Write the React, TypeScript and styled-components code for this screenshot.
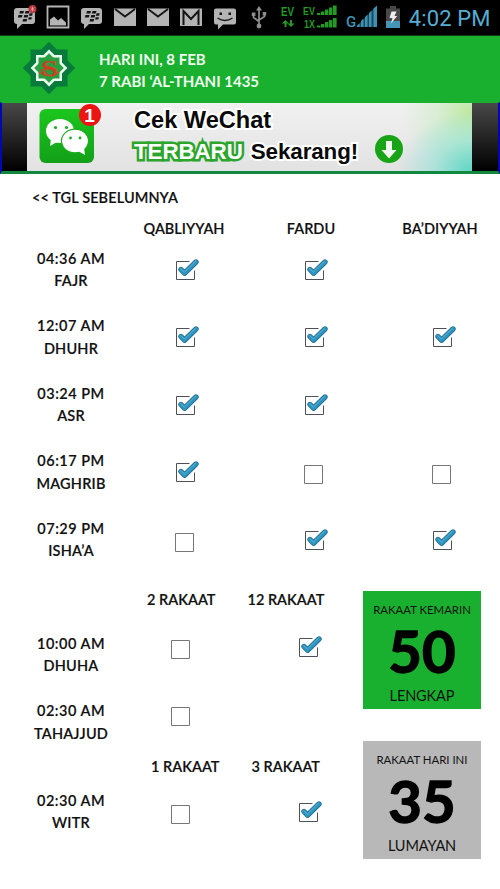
import React, { FC } from 'react';
import styled, { createGlobalStyle } from 'styled-components';

const COLORS = {
  green: '#18b02e',
  darkGreen: '#087a3c',
  grey: '#b8b8b8',
  icon: '#b4b4b4',
  holo: '#55aed2',
  signal: '#239a23',
  black: '#111',
};

type Mark = 'on' | 'off' | 'none';

interface prayerInterface {
  time: string;
  name: string;
  marks: Mark[];
};

interface rowInterface extends prayerInterface {
  compact?: boolean;
  markTop?: number;
};

const DAILY: prayerInterface[] = [
  { time: '04:36 AM', name: 'FAJR', marks: ['on', 'on', 'none'] },
  { time: '12:07 AM', name: 'DHUHR', marks: ['on', 'on', 'on'] },
  { time: '03:24 PM', name: 'ASR', marks: ['on', 'on', 'none'] },
  { time: '06:17 PM', name: 'MAGHRIB', marks: ['on', 'off', 'off'] },
  { time: '07:29 PM', name: 'ISHA’A', marks: ['off', 'on', 'on'] },
];

const NIGHT: prayerInterface[] = [
  { time: '10:00 AM', name: 'DHUHA', marks: ['off', 'on'] },
  { time: '02:30 AM', name: 'TAHAJJUD', marks: ['off', 'none'] },
];

const WITR: prayerInterface = { time: '02:30 AM', name: 'WITR', marks: ['off', 'on'] };

const BbmIcon: FC<{ alert?: boolean }> = ({ alert }) => (
  <StatusIcon viewBox="0 0 24 24">
    <path d="M4 3h15q3 0 3 3v10q0 3-3 3H9l-5 5v-5q-3 0-3-3V6q0-3 3-3z" fill={COLORS.icon} />
    <path
      d="M7 6h4l-.7 2.6H6.3zM12.5 6h4l-.7 2.6h-4zM5.5 10h4l-.7 2.6h-4zM11.3 10h4l-.7 2.6h-4zM16.5 8.3h3.2l-.6 2.4h-3.2zM15.7 12.2h3.2l-.6 2.4h-3.2zM10.2 14h4l-.7 2.6h-4z"
      fill="#151515"
    />
    {alert && (
      <>
        <circle cx="19.5" cy="4" r="4" fill="#b8323c" />
        <path d="M17.5 2.5l4 3m0-3l-4 3m2-4v5" stroke="#e4a0a0" strokeWidth=".8" />
      </>
    )}
  </StatusIcon>
);

const PictureIcon = () => (
  <StatusIcon viewBox="0 0 24 24">
    <path d="M1.5 1.5h21v21h-21z" fill="none" stroke={COLORS.icon} strokeWidth="1.8" />
    <path d="M4 20.5v-6l4-3 4 4 3-2.5 5 4.5v3z" fill={COLORS.icon} />
  </StatusIcon>
);

const MailIcon = () => (
  <StatusIcon viewBox="0 0 24 24">
    <path d="M1 3.5h22V21H1z" fill={COLORS.icon} />
    <path d="M2 4l10 7.5L22 4" fill="none" stroke="#151515" strokeWidth="1.8" />
  </StatusIcon>
);

const GmailIcon = () => (
  <StatusIcon viewBox="0 0 24 24">
    <path d="M1 3.5h22V21H1z" fill={COLORS.icon} />
    <path d="M4.5 20V6l7.5 8 7.5-8v14" fill="none" stroke="#151515" strokeWidth="2" />
  </StatusIcon>
);

const SmsIcon = () => (
  <StatusIcon viewBox="0 0 24 24">
    <path d="M3 3.5h18q2 0 2 2v12q0 2-2 2H10l-5 5v-5H3q-2 0-2-2v-12q0-2 2-2z" fill={COLORS.icon} />
    <path d="M6.5 7.5H9V10H6.5zM15.5 7.5H18V10h-2.5z" fill="#151515" />
    <path d="M4.5 13q7.5 5 15 0" fill="none" stroke="#151515" strokeWidth="1.5" />
  </StatusIcon>
);

const UsbIcon = () => (
  <UsbSvg viewBox="0 0 16 24">
    <path
      d="M8 4v17M2.5 9v3.5l5.5 4M13.5 9v2.5L8 15"
      fill="none"
      stroke="#8e8e8e"
      strokeWidth="1.7"
    />
    <path d="M8 1l3 4.5H5zM.8 7.5h3.6v3.4H.8zM11.7 7h3.5v3.5h-3.5z" fill="#8e8e8e" />
    <circle cx="8" cy="21" r="2.4" fill="#8e8e8e" />
  </UsbSvg>
);

const DataIcon = () => (
  <DataSvg viewBox="0 0 14 24">
    <SignalText x="0" y="11" textLength="13" lengthAdjust="spacingAndGlyphs">EV</SignalText>
    <path
      d="M3.5 22v-3.5H.8L4.3 15l3.5 3.5H5.5V22zM9 15h2v3.5h2.5L10 22l-3.5-3.5H9z"
      fill={COLORS.signal}
    />
  </DataSvg>
);

const Bars: FC<{ y: number }> = ({ y }) => (
  <path
    d={`M14 ${y}v-2h3.4v2zM18 ${y}v-3.5h3.4v3.5zM22 ${y}v-5.5h3.4v5.5zM26 ${y}v-7.5h3.4v7.5zM30 ${y}v-9.5h3.6v9.5z`}
    fill={COLORS.signal}
  />
);

const EvIcon = () => (
  <EvSvg viewBox="0 0 34 24">
    <SmallSignalText x="0" y="10" textLength="12" lengthAdjust="spacingAndGlyphs">EV</SmallSignalText>
    <Bars y={10} />
    <SmallSignalText x="1" y="22.5" textLength="11" lengthAdjust="spacingAndGlyphs">1X</SmallSignalText>
    <Bars y={22.5} />
  </EvSvg>
);

const GsmIcon = () => (
  <GsmSvg viewBox="0 0 32 24">
    <GsmText x="0" y="21.5">G</GsmText>
    <path d="M10 22L31 .5V22z" fill="#1b4a5e" />
    <path
      d="M11 22v-1.5l2.5-2V22zM15 22v-6l2.5-2.5V22zM19 22V12l2.5-2.5V22zM23 22V8l2.5-2.5V22zM27.5 22V3.5L31 .5V22z"
      fill="#3f91b2"
    />
  </GsmSvg>
);

const BatteryIcon = () => (
  <BatterySvg viewBox="0 0 14 22">
    <path d="M4 0h6v2.5h4V22H0V2.5h4z" fill="#484848" />
    <path d="M0 15h14v7H0z" fill="#4595b7" />
    <path d="M5.5 5.5h5L8.5 10h2.7L5 17.5 6.5 12h-3z" fill="#eee" />
  </BatterySvg>
);

const StarLogo = () => (
  <LogoSvg viewBox="-27 -27 54 54">
    <g fill={COLORS.darkGreen}>
      <path d="M-18.5-18.5h37v37h-37z" />
      <path d="M-18.5-18.5h37v37h-37z" transform="rotate(45)" />
    </g>
    <g fill="#e9fff0">
      <path d="M-13-13h26v26h-26z" />
      <path d="M-13-13h26v26h-26z" transform="rotate(45)" />
    </g>
    <g fill="#2c9d3f">
      <path d="M-10.5-10.5h21v21h-21z" />
      <path d="M-10.5-10.5h21v21h-21z" transform="rotate(45)" />
    </g>
    <LogoLetter x="-8" y="7.5" textLength="17" lengthAdjust="spacingAndGlyphs">S</LogoLetter>
    <path
      d="M-10 6q5-4 9 .5T10 3.500M-9 3q3-3 7-1M-4-6V5M-7-2L7 2"
      fill="none"
      stroke="#c84322"
      strokeWidth="1.1"
    />
  </LogoSvg>
);

const WechatIcon = () => (
  <WechatSvg viewBox="0 0 64 62">
    <defs>
      <linearGradient id="wechat" x1="0" y1="0" x2="0" y2="1">
        <stop offset="0" stopColor="#1cc61e" />
        <stop offset="1" stopColor="#12a018" />
      </linearGradient>
    </defs>
    <rect x="0.5" y="6" width="54.5" height="54" rx="6" fill="url(#wechat)" />
    <path d="M12 36l-1 7 7-4z" fill="#fff" />
    <ellipse cx="21" cy="28" rx="14" ry="12" fill="#fff" />
    <ellipse cx="36" cy="38" rx="13.5" ry="11.8" fill="#fff" stroke="#19ae1d" strokeWidth="1.2" />
    <path d="M39 48l7 4-1-7z" fill="#fff" />
    <g fill="#19ae1d">
      <circle cx="16.5" cy="24.5" r="1.6" />
      <circle cx="27.5" cy="24.5" r="1.6" />
      <circle cx="31.5" cy="35" r="1.4" />
      <circle cx="41" cy="35" r="1.4" />
    </g>
    <circle cx="51" cy="12" r="11" fill="#ec1513" />
    <BadgeText x="50.5" y="19" textAnchor="middle">1</BadgeText>
  </WechatSvg>
);

const DownloadIcon = () => (
  <DownloadSvg viewBox="0 0 28 28">
    <circle cx="14" cy="14" r="14" fill="#18a416" />
    <path d="M11 6h6v9h4.5L14 23.5 6.5 15H11z" fill="#f2f7ef" />
  </DownloadSvg>
);

const Checkbox: FC<{ mark: Mark }> = ({ mark }) => {
  if (mark === 'none') return null;
  if (mark === 'off') {
    return (
      <CheckSvg viewBox="0 0 28 26">
        <path d="M4.5 6.5h18v18h-18z" fill="#fff" stroke="#777" />
      </CheckSvg>
    );
  }
  return (
    <CheckSvg viewBox="0 0 28 26">
      <path d="M18.5 4.5h-13v18h18v-9" fill="none" stroke="#4d5157" />
      <g fill="none" strokeLinecap="round" strokeLinejoin="round">
        <path d="M10 12.5l3.5 3.7L25 5" stroke="#276f90" strokeWidth="5.4" />
        <path d="M10 12.5l3.5 3.7L25 5" stroke="#2e95c0" strokeWidth="3.8" />
        <path d="M9.8 11.8l3.6 3.2L24.5 4.2" stroke="#58b4d8" strokeWidth="1" />
      </g>
    </CheckSvg>
  );
};

const PrayerRow: FC<rowInterface> = ({ time, name, marks, compact, markTop = 9 }) => (
  <Row $compact={compact}>
    <PrayerLabel>
      <PrayerTime>{time}</PrayerTime>
      <span>{name}</span>
    </PrayerLabel>
    {marks.map((mark, index) => (
      <Cell key={index} $top={markTop}>
        <Checkbox mark={mark} />
      </Cell>
    ))}
  </Row>
);

const App = () => {
  return (
    <Screen>
      <GlobalStyle />
      <StatusBar>
        <Notifications>
          <BbmIcon alert />
          <PictureIcon />
          <BbmIcon />
          <MailIcon />
          <MailIcon />
          <GmailIcon />
          <SmsIcon />
        </Notifications>
        <UsbIcon />
        <DataIcon />
        <EvIcon />
        <GsmIcon />
        <BatteryIcon />
        <Clock>4:02 PM</Clock>
      </StatusBar>
      <Header>
        <StarLogo />
        <Dates>
          <DateLine>HARI INI, 8 FEB</DateLine>
          <DateLine>7 RABI ‘AL-THANI 1435</DateLine>
        </Dates>
      </Header>
      <Banner>
        <Ad>
          <WechatIcon />
          <AdCopy>
            <AdTitle>Cek WeChat</AdTitle>
            <AdLine>
              <AdAccent>TERBARU</AdAccent>
              <AdText>Sekarang!</AdText>
            </AdLine>
          </AdCopy>
          <DownloadIcon />
        </Ad>
      </Banner>
      <Content>
        <PreviousDay>&lt;&lt; TGL SEBELUMNYA</PreviousDay>
        <ColumnHeads>
          <span />
          <Head>QABLIYYAH</Head>
          <Head>FARDU</Head>
          <Head>BA’DIYYAH</Head>
        </ColumnHeads>
        {DAILY.map((prayer) => (
          <PrayerRow key={prayer.name} {...prayer} />
        ))}
        <Bottom>
          <Extra>
            <RakaatHeads>
              <Head>2 RAKAAT</Head>
              <Head>12 RAKAAT</Head>
            </RakaatHeads>
            {NIGHT.map((prayer) => (
              <PrayerRow key={prayer.name} compact markTop={1} {...prayer} />
            ))}
            <RakaatHeads $last>
              <Head>1 RAKAAT</Head>
              <Head>3 RAKAAT</Head>
            </RakaatHeads>
            <PrayerRow compact {...WITR} />
          </Extra>
          <Scores>
            <ScoreCard $color={COLORS.green}>
              <ScoreTitle>RAKAAT KEMARIN</ScoreTitle>
              <ScoreValue>50</ScoreValue>
              <ScoreNote>LENGKAP</ScoreNote>
            </ScoreCard>
            <ScoreCard $color={COLORS.grey}>
              <ScoreTitle>RAKAAT HARI INI</ScoreTitle>
              <ScoreValue>35</ScoreValue>
              <ScoreNote>LUMAYAN</ScoreNote>
            </ScoreCard>
          </Scores>
        </Bottom>
      </Content>
    </Screen>
  );
};

const GlobalStyle = createGlobalStyle`
  * {
    box-sizing: border-box;
  }

  body {
    margin: 0;
    background-color: #fff;
  }

  svg {
    display: block;
    flex-shrink: 0;
    overflow: visible;
  }
`;

const Screen = styled.div`
  width: 500px;
  height: 889px;
  overflow: hidden;
  font-family: Lato, 'Liberation Sans', sans-serif;
  color: ${COLORS.black};
  background-color: #fff;
`;

const StatusBar = styled.div`
  display: flex;
  align-items: center;
  height: 36px;
  padding: 0 10px 1px 13px;
  background-color: #000;
  border-bottom: 1px solid #123b12;
`;

const Notifications = styled.div`
  display: flex;
  gap: 9.3px;
`;

const StatusIcon = styled.svg`
  width: 24px;
  height: 24px;
`;

const UsbSvg = styled.svg`
  width: 16px;
  height: 24px;
  margin-left: 14px;
`;

const DataSvg = styled.svg`
  width: 14px;
  height: 24px;
  margin-left: 14px;
`;

const EvSvg = styled.svg`
  width: 34px;
  height: 24px;
  margin-left: 8px;
`;

const SignalText = styled.text`
  font: bold 13px 'Liberation Sans', sans-serif;
  fill: ${COLORS.signal};
`;

const SmallSignalText = styled(SignalText)`
  font-size: 10.5px;
`;

const GsmSvg = styled.svg`
  width: 32px;
  height: 24px;
  margin-left: 9px;
`;

const GsmText = styled.text`
  font: 500 15px Roboto, sans-serif;
  fill: #3f91b2;
`;

const BatterySvg = styled.svg`
  width: 14px;
  height: 22px;
  margin: 0 0 1px 8px;
`;

const Clock = styled.div`
  margin-left: 9px;
  padding-top: 2px;
  font-family: Roboto, sans-serif;
  font-size: 22px;
  letter-spacing: 0.1px;
  white-space: nowrap;
  color: ${COLORS.holo};
`;

const Header = styled.header`
  display: flex;
  height: 66px;
  padding-left: 22px;
  background-color: ${COLORS.green};
`;

const LogoSvg = styled.svg`
  width: 54px;
  height: 54px;
  margin-top: 5px;
`;

const LogoLetter = styled.text`
  font: bold 23px 'Liberation Serif', serif;
  fill: #c84322;
`;

const Dates = styled.div`
  padding: 12px 0 0 23px;
`;

const DateLine = styled.div`
  font-size: 15px;
  font-weight: 700;
  line-height: 22px;
  color: #f0fff0;
`;

const Banner = styled.div`
  height: 72px;
  padding: 0 26px 0 25px;
  border: 2px solid #0505b4;
  border-top: 1px solid ${COLORS.green};
  border-bottom: 3px solid #108840;
  background: linear-gradient(#484848, #000);
`;

const Ad = styled.div`
  display: flex;
  height: 68px;
  padding-left: 12px;
  background:
    radial-gradient(ellipse 75px 60px at 100% 100%, #5fd6c4, rgba(130, 225, 210, 0.55) 50%, transparent),
    radial-gradient(ellipse 70px 60px at 100% 15%, #bde8a0, rgba(200, 236, 190, 0.55) 50%, transparent),
    linear-gradient(#f1f1f1, #e2e2e2);
`;

const WechatSvg = styled.svg`
  width: 64px;
  height: 62px;
`;

const BadgeText = styled.text`
  font: bold 19px 'Liberation Sans', Arial, sans-serif;
  fill: #fff;
`;

const AdCopy = styled.div`
  width: 245px;
  padding: 3px 0 0 31px;
  font-family: 'Liberation Sans', Arial, sans-serif;
  font-weight: 700;
  white-space: nowrap;
`;

const AdText = styled.span`
  color: #0a0a0a;
  -webkit-text-stroke: 4px #fff;
  paint-order: stroke fill;
`;

const AdTitle = styled(AdText)`
  display: block;
  font-size: 23.6px;
  line-height: 29px;
`;

const AdLine = styled.div`
  display: flex;
  gap: 8px;
  font-size: 22.4px;
  line-height: 33px;
  letter-spacing: -0.1px;
`;

const AdAccent = styled.span`
  color: #fff;
  -webkit-text-stroke: 5px #2ba52b;
  paint-order: stroke fill;
`;

const DownloadSvg = styled.svg`
  width: 28px;
  height: 28px;
  margin: 32px 0 0 27px;
`;

const Content = styled.main`
  padding-top: 13px;
  font-size: 14.5px;
  font-weight: 600;
  -webkit-text-stroke: 0.15px currentColor;
`;

const PreviousDay = styled.div`
  padding-left: 32px;
  line-height: 22px;
  letter-spacing: 0.1px;
`;

const ColumnHeads = styled.div`
  display: grid;
  grid-template-columns: 142px 84px 170px 88px;
  height: 39px;
  padding-top: 9px;
`;

const Head = styled.div`
  line-height: 22px;
  text-align: center;
  white-space: nowrap;
`;

const Row = styled.div<{ $compact?: boolean }>`
  display: grid;
  grid-template-columns: ${({ $compact }) =>
    $compact ? '142px 78px 48px 80px' : '142px 86px 172px 84px'};
  height: 67.4px;

  > :nth-child(3) {
    grid-column: ${({ $compact }) => ($compact ? 4 : 3)};
  }
`;

const PrayerLabel = styled.div`
  display: flex;
  flex-direction: column;
  align-items: center;
  line-height: 22.4px;
  letter-spacing: 0.2px;
`;

const PrayerTime = styled.span`
  letter-spacing: 0.5px;
`;

const Cell = styled.div<{ $top: number }>`
  display: flex;
  justify-content: center;
  padding-top: ${({ $top }) => $top}px;
`;

const CheckSvg = styled.svg`
  width: 28px;
  height: 26px;
`;

const Bottom = styled.div`
  display: flex;
`;

const Extra = styled.div`
  width: 363px;
`;

const RakaatHeads = styled.div<{ $last?: boolean }>`
  display: flex;
  gap: 32px;
  height: ${({ $last }) => ($last ? 34 : 44)}px;
  margin-top: ${({ $last }) => ($last ? -12 : 4)}px;
  padding-left: ${({ $last }) => ($last ? 151 : 147)}px;
`;

const Scores = styled.div`
  display: flex;
  flex-direction: column;
  gap: 32px;
  padding-top: 6px;
`;

const ScoreCard = styled.section<{ $color: string }>`
  width: 118px;
  height: 118px;
  padding-top: 9px;
  font-weight: 400;
  text-align: center;
  background-color: ${({ $color }) => $color};
  -webkit-text-stroke: 0;
`;

const ScoreTitle = styled.div`
  font-size: 11.4px;
  line-height: 20px;
`;

const ScoreValue = styled.div`
  margin-bottom: 2px;
  font-size: 58px;
  font-weight: 700;
  line-height: 62px;
  color: #000;
  -webkit-text-stroke: 1.4px #000;
`;

const ScoreNote = styled.div`
  font-size: 14.5px;
  line-height: 24px;
  letter-spacing: -0.1px;
`;

export default App;
